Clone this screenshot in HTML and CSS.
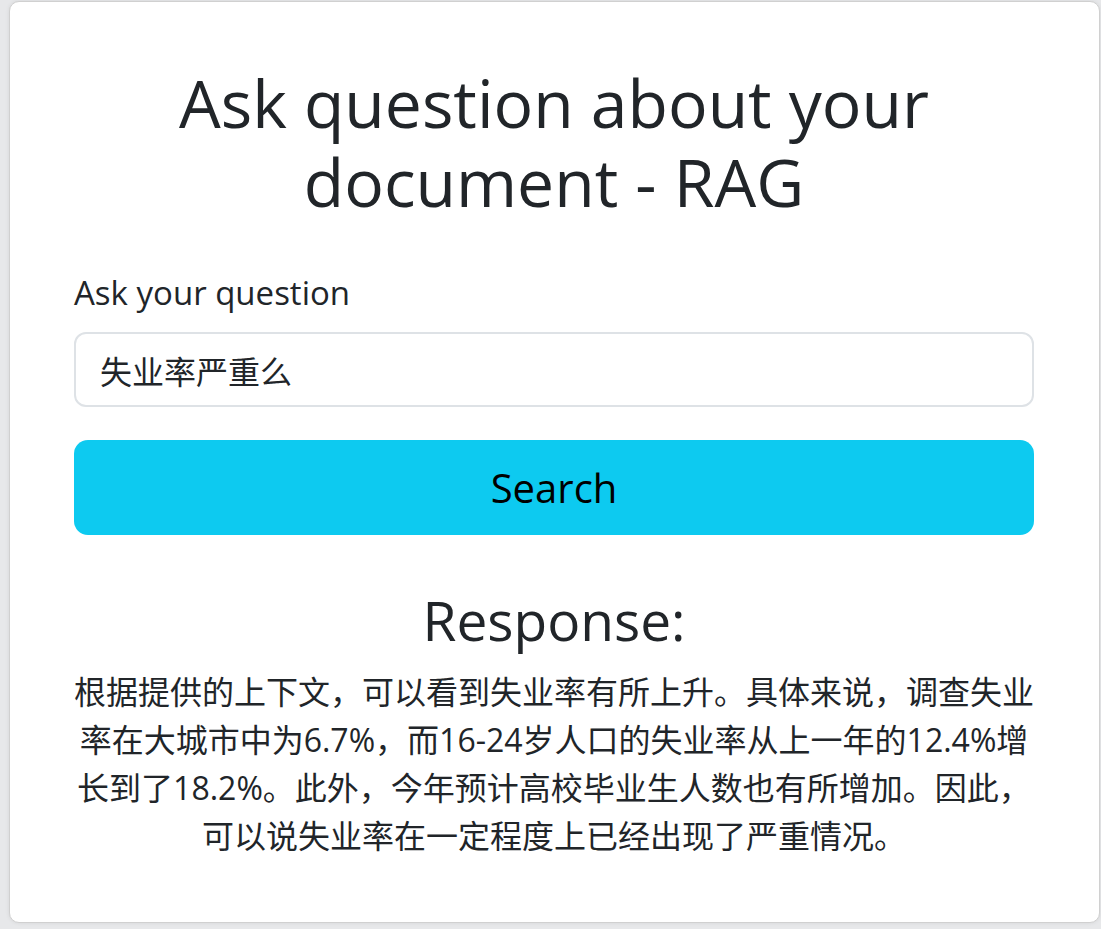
FILE: index.html
```html
<!DOCTYPE html>
<html lang="zh">
<head>
<meta charset="utf-8">
<title>RAG</title>
<link rel="stylesheet" href="styles.css">
</head>
<body>
<div class="card">
  <h1 class="title">Ask question about your document - RAG</h1>
  <form class="ask">
    <label class="label" for="q">Ask your question</label>
    <input class="input" id="q" type="text" value="失业率严重么">
    <button class="btn" type="button">Search</button>
  </form>
  <div class="response">
    <h2 class="response-title">Response:</h2>
    <p class="response-text">根据提供的上下文，可以看到失业率有所上升。具体来说，调查失业率在大城市中为6.7%，而16-24岁人口的失业率从上一年的12.4%增长到了18.2%。此外，今年预计高校毕业生人数也有所增加。因此，可以说失业率在一定程度上已经出现了严重情况。</p>
  </div>
</div>
</body>
</html>
```

FILE: styles.css
```css
html, body {
  margin: 0;
  padding: 0;
}
body {
  background: #e7e8ea;
  padding: 1px 1px 0 9px;
  height: 929px;
  box-sizing: border-box;
  overflow: hidden;
  font-family: "Open Sans", "Noto Sans CJK SC", sans-serif;
  color: #212529;
}
.card {
  background: #fff;
  border: 1px solid #d0d0d0;
  border-radius: 10px;
  box-shadow: 0 0 4px rgba(0, 0, 0, 0.08);
  height: 922px;
  box-sizing: border-box;
  padding: 61px 65px 0 64px;
  display: flex;
  flex-direction: column;
}
.title {
  margin: 0;
  font-size: 66px;
  line-height: 79px;
  font-weight: 400;
  text-align: center;
}
.ask {
  margin-top: 48px;
  display: flex;
  flex-direction: column;
}
.label {
  font-size: 33px;
  line-height: 48px;
  margin-bottom: 15px;
}
.input {
  height: 75px;
  box-sizing: border-box;
  border: 2px solid #dee2e6;
  border-radius: 12px;
  padding: 0 24px;
  font-family: "Open Sans", "Noto Sans CJK SC", sans-serif;
  font-size: 32px;
  color: #212529;
  outline: none;
}
.btn {
  margin-top: 33px;
  height: 95px;
  border: none;
  border-radius: 14px;
  background: #0dcaf0;
  color: #000;
  font-family: "Open Sans", "Noto Sans CJK SC", sans-serif;
  font-size: 40px;
}
.response {
  margin-top: 54px;
  text-align: center;
}
.response-title {
  margin: 0;
  font-size: 55px;
  line-height: 62px;
  font-weight: 400;
}
.response-text {
  margin: 17px 0 0;
  font-size: 32px;
  line-height: 48px;
}
```
